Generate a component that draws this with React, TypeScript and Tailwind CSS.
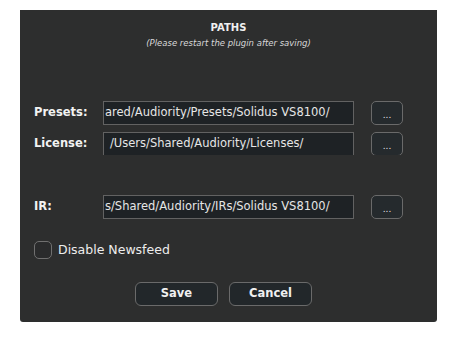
import React from "react";

const font = { fontFamily: '"DejaVu Sans", "Liberation Sans", sans-serif' };

interface PathRowProps {
  label: string;
  value: string;
  clipped?: boolean;
  indent?: boolean;
}

function PathRow({ label, value, clipped, indent }: PathRowProps) {
  return (
    <div className={`flex items-start ${clipped ? "h-[23px] overflow-hidden" : "h-[24px]"}`}>
      <div className="w-[69px] h-[24px] flex items-center text-[11.5px] font-bold text-[#f2f2f2]">{label}</div>
      <div
        className={`w-[251px] h-[24px] bg-[#1e2225] border border-[#626262] flex items-center overflow-hidden whitespace-nowrap text-[11.5px] text-[#e6e6e6] ${
          indent ? "pl-[6px]" : "pl-[1px]"
        }`}
      >
        {value}
      </div>
      <button className="ml-[17px] w-[32px] h-[24px] rounded-[5px] bg-[#252a2d] border border-[#6a6a6a] flex items-end justify-center pb-[4px] text-[9px] leading-none text-[#e6e6e6]">
        ...
      </button>
    </div>
  );
}

export default function App() {
  return (
    <div className="w-[474px] h-[338px] bg-white overflow-hidden" style={font}>
      <div className="ml-[20px] mt-[10px] w-[417px] h-[312px] bg-[#2d2e2e] rounded-b-[3px] flex flex-col pl-[14px]">
        <div className="pt-[12px] pr-[14px] flex flex-col items-center">
          <div className="text-[10px] leading-[12px] font-bold text-[#f0f0f0]">PATHS</div>
          <div className="mt-[4px] text-[8.5px] leading-[11px] italic text-[#d8d8d8]">(Please restart the plugin after saving)</div>
        </div>

        <div className="mt-[52px]">
          <PathRow label="Presets:" value="ared/Audiority/Presets/Solidus VS8100/" />
        </div>
        <div className="mt-[7px]">
          <PathRow label="License:" value="/Users/Shared/Audiority/Licenses/" clipped indent />
        </div>
        <div className="mt-[40px]">
          <PathRow label="IR:" value="s/Shared/Audiority/IRs/Solidus VS8100/" />
        </div>

        <label className="mt-[22px] flex items-center gap-[6px]">
          <span className="w-[18px] h-[18px] rounded-[5px] border border-[#707070] bg-[#2a2b2c]" />
          <span className="text-[12.5px] text-[#ededed]">Disable Newsfeed</span>
        </label>

        <div className="mt-[22px] ml-[101px] flex gap-[11px]">
          <button className="w-[83px] h-[24px] rounded-[6px] bg-[#22272a] border border-[#6a6a6a] text-[11.5px] font-bold text-[#f0f0f0]">
            Save
          </button>
          <button className="w-[83px] h-[24px] rounded-[6px] bg-[#22272a] border border-[#6a6a6a] text-[11.5px] font-bold text-[#f0f0f0]">
            Cancel
          </button>
        </div>
      </div>
    </div>
  );
}
